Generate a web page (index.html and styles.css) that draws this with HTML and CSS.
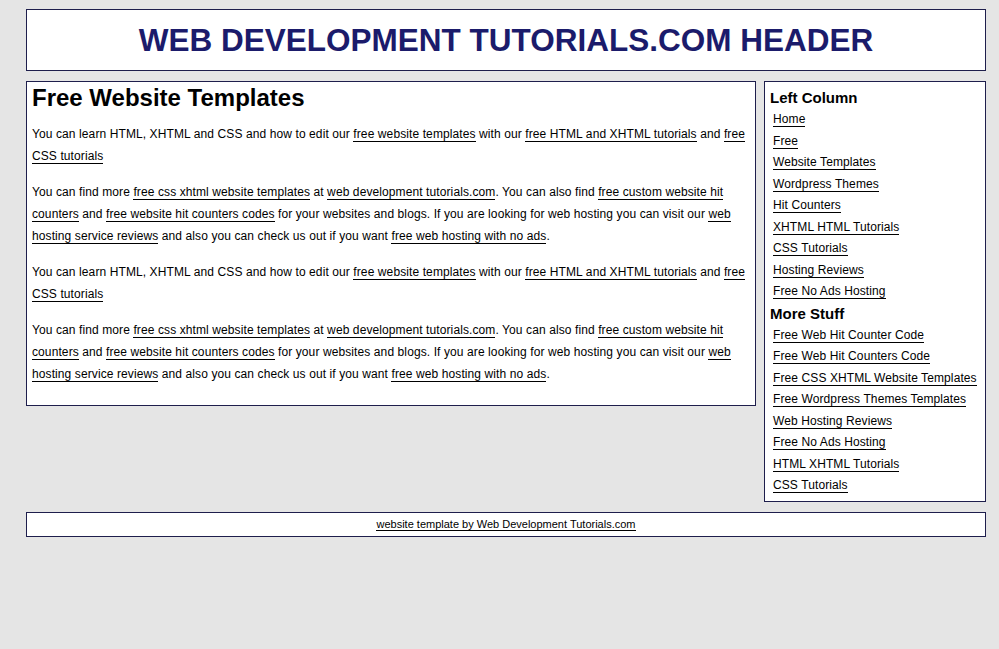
FILE: index.html
```html
<!DOCTYPE html>
<html>
<head>
<meta charset="utf-8">
<title>Web Development Tutorials</title>
<link rel="stylesheet" href="styles.css">
</head>
<body>
<div class="wrap">
  <div class="header"><h1>WEB DEVELOPMENT TUTORIALS.COM HEADER</h1></div>
  <div class="main">
    <div class="content">
      <h2>Free Website Templates</h2>
      <p>You can learn HTML, XHTML and CSS and how to edit our <a href="#">free website templates</a> with our <a href="#">free HTML and XHTML tutorials</a> and <a href="#">free CSS tutorials</a></p>
      <p>You can find more <a href="#">free css xhtml website templates</a> at <a href="#">web development tutorials.com</a>. You can also find <a href="#">free custom website hit counters</a> and <a href="#">free website hit counters codes</a> for your websites and blogs. If you are looking for web hosting you can visit our <a href="#">web hosting service reviews</a> and also you can check us out if you want <a href="#">free web hosting with no ads</a>.</p>
      <p>You can learn HTML, XHTML and CSS and how to edit our <a href="#">free website templates</a> with our <a href="#">free HTML and XHTML tutorials</a> and <a href="#">free CSS tutorials</a></p>
      <p>You can find more <a href="#">free css xhtml website templates</a> at <a href="#">web development tutorials.com</a>. You can also find <a href="#">free custom website hit counters</a> and <a href="#">free website hit counters codes</a> for your websites and blogs. If you are looking for web hosting you can visit our <a href="#">web hosting service reviews</a> and also you can check us out if you want <a href="#">free web hosting with no ads</a>.</p>
    </div>
    <div class="sidebar">
      <h3>Left Column</h3>
      <ul class="nav">
        <li><a href="#">Home</a></li>
        <li><a href="#">Free</a></li>
        <li><a href="#">Website Templates</a></li>
        <li><a href="#">Wordpress Themes</a></li>
        <li><a href="#">Hit Counters</a></li>
        <li><a href="#">XHTML HTML Tutorials</a></li>
        <li><a href="#">CSS Tutorials</a></li>
        <li><a href="#">Hosting Reviews</a></li>
        <li><a href="#">Free No Ads Hosting</a></li>
      </ul>
      <h3>More Stuff</h3>
      <ul class="nav">
        <li><a href="#">Free Web Hit Counter Code</a></li>
        <li><a href="#">Free Web Hit Counters Code</a></li>
        <li><a href="#">Free CSS XHTML Website Templates</a></li>
        <li><a href="#">Free Wordpress Themes Templates</a></li>
        <li><a href="#">Web Hosting Reviews</a></li>
        <li><a href="#">Free No Ads Hosting</a></li>
        <li><a href="#">HTML XHTML Tutorials</a></li>
        <li><a href="#">CSS Tutorials</a></li>
      </ul>
    </div>
  </div>
  <div class="footer"><a href="#">website template by Web Development Tutorials.com</a></div>
</div>
</body>
</html>
```
FILE: styles.css
```css
html, body {
  margin: 0;
  padding: 0;
  background: #e5e5e5;
}
body {
  font-family: "Liberation Sans", Arial, sans-serif;
  color: #000;
  font-size: 12px;
}
.wrap {
  width: 960px;
  padding: 9px 0 0 26px;
}
a {
  color: #000;
  text-decoration: none;
  border-bottom: 1px solid #000;
}
.header {
  background: #fff;
  border: 1px solid #1e1e4c;
  height: 60px;
  display: flex;
  align-items: center;
  justify-content: center;
}
.header h1 {
  margin: 0;
  font-size: 31.5px;
  font-weight: bold;
  color: #1b1b6b;
}
.main {
  display: flex;
  align-items: flex-start;
  gap: 8px;
  margin-top: 10px;
}
.content {
  width: 718px;
  background: #fff;
  border: 1px solid #1e1e4c;
  padding: 2px 5px 20px 5px;
  letter-spacing: 0.1px;
}
.content h2 {
  margin: 0 0 11px 0;
  font-size: 24px;
  line-height: 28px;
  font-weight: bold;
  letter-spacing: 0;
}
.content p {
  margin: 0 0 14px 0;
  line-height: 22px;
}
.content p:last-child {
  margin-bottom: 0;
}
.sidebar {
  width: 210px;
  background: #fff;
  border: 1px solid #1e1e4c;
  padding: 5px 5px 4px 5px;
}
.sidebar h3 {
  margin: 0;
  font-size: 15px;
  line-height: 22px;
  font-weight: bold;
}
.nav {
  list-style: none;
  margin: 0;
  padding: 0 0 0 3px;
  letter-spacing: 0.1px;
}
.nav li {
  line-height: 21.5px;
  white-space: nowrap;
}
.footer {
  margin-top: 10px;
  background: #fff;
  border: 1px solid #1e1e4c;
  height: 23px;
  display: flex;
  align-items: center;
  justify-content: center;
  font-size: 11px;
}
```
